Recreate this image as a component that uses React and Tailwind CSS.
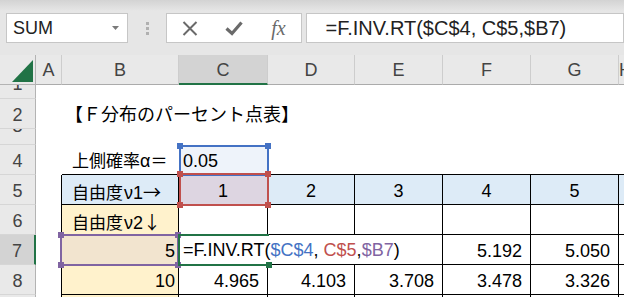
import React from "react";

const FONT = "font-['Liberation_Sans','Noto_Sans_CJK_JP',sans-serif]";

function Corner({ pos, color }) {
  return <div className={`absolute h-[6px] w-[6px] ${pos} ${color}`} />;
}

function RowHead({ children, cls = "", inner = "pt-[1px]" }) {
  return (
    <div className={`overflow-hidden border-b border-r border-b-[#d6d6d6] border-r-[#b3b3b3] text-center text-[#444] ${cls}`}>
      <div className={`leading-[30px] ${inner}`}>{children}</div>
    </div>
  );
}

function ColHead({ children, cls = "" }) {
  return (
    <div className={`border-b border-r border-b-[#ababab] border-r-[#cdcdcd] bg-[#e9e9e9] text-center leading-[30px] text-[#444] ${cls}`}>
      {children}
    </div>
  );
}

const T = "border-b border-r border-black";
const ARROW = "font-['Noto_Sans_CJK_JP',sans-serif] text-[18px] [font-variant-east-asian:full-width]";

export default function App() {
  return (
    <div className={`h-[297px] w-[624px] overflow-hidden bg-white ${FONT}`}>
      {/* toolbar */}
      <div className="flex h-[55px] items-start bg-[linear-gradient(to_bottom,#d3d3d3_0px,#e6e6e6_11px,#e6e6e6_100%)] pt-[13px]">
        <div className="ml-[6px] flex h-[30px] w-[126px] items-center border border-[#c6c6c6] bg-white pl-[6px] text-[18px] text-[#222]">
          <span className="flex-1 leading-[28px]">SUM</span>
          <svg width="8" height="5" viewBox="0 0 8 5" className="mr-[7px]">
            <polygon points="0,0 7,0 3.5,4" fill="#7a7a7a" />
          </svg>
        </div>
        <div className="ml-[18px] mt-[9px] flex w-[3px] flex-col gap-[2px]">
          <div className="h-[3px] w-[3px] bg-[#b0b0b0]" />
          <div className="h-[3px] w-[3px] bg-[#b0b0b0]" />
          <div className="h-[3px] w-[3px] bg-[#b0b0b0]" />
        </div>
        <div className="ml-[17px] flex h-[30px] w-[136px] items-center border border-[#c6c6c6] bg-white pl-[1px]">
          <div className="flex w-[45px] justify-center">
            <svg width="16" height="15" viewBox="0 0 16 15">
              <path d="M1.5 1 L14.5 14 M14.5 1 L1.5 14" stroke="#6a6a6a" strokeWidth="2" fill="none" />
            </svg>
          </div>
          <div className="flex w-[45px] justify-center">
            <svg width="18" height="15" viewBox="0 0 18 15">
              <path d="M1.5 7.5 L7 12.5 L16.5 1.5" stroke="#6a6a6a" strokeWidth="3.2" fill="none" />
            </svg>
          </div>
          <div className="flex w-[45px] justify-center font-['Liberation_Serif',serif] text-[20px] italic leading-[28px] text-[#6a6a6a]">
            fx
          </div>
        </div>
        <div className="ml-[4px] flex h-[30px] w-[330px] items-center border border-[#c6c6c6] bg-white pl-[19px] text-[20px] text-[#222]">
          <span className="leading-[28px]">=F.INV.RT($C$4, C$5,$B7)</span>
        </div>
      </div>

      {/* sheet */}
      <div className="grid grid-cols-[36px_26px_117px_89px_87px_88px_88px_88px_1fr] grid-rows-[30px_14px_30px_16px_30px_30px_30px_30px_30px] text-[18px] text-black">
        {/* header row */}
        <div className="relative border-b border-r border-[#b3b3b3] bg-[#e9e9e9]">
          <svg className="absolute left-0 top-0" width="36" height="30">
            <polygon points="12,27 33,5 33,27" fill="#217346" />
          </svg>
        </div>
        <ColHead>A</ColHead>
        <ColHead>B</ColHead>
        <ColHead cls="!border-b-2 !border-b-[#217346] !bg-[#d3d3d3] text-[#2f5541]">C</ColHead>
        <ColHead>D</ColHead>
        <ColHead>E</ColHead>
        <ColHead>F</ColHead>
        <ColHead>G</ColHead>
        <ColHead>H</ColHead>

        {/* row 1 */}
        <RowHead cls="bg-[#e9e9e9]" inner="-mt-[16px]">1</RowHead>
        <div /><div /><div /><div /><div /><div /><div /><div />

        {/* row 2 */}
        <RowHead cls="bg-[#e9e9e9]">2</RowHead>
        <div />
        <div className="whitespace-nowrap pl-[3px] pt-[1px] leading-[30px]">【Ｆ分布のパーセント点表】</div>
        <div /><div /><div /><div /><div /><div />

        {/* row 3 */}
        <RowHead cls="bg-[#e9e9e9]" inner="-mt-[18px]">3</RowHead>
        <div /><div /><div /><div /><div /><div /><div /><div />

        {/* row 4 */}
        <RowHead cls="bg-[#e9e9e9]">4</RowHead>
        <div />
        <div className="whitespace-nowrap border-b border-black pl-[10px] pt-[1px] leading-[30px]">
          <span className="text-[17px]">上側確率</span>α<span className="text-[17px]">＝</span>
        </div>
        <div className="relative border-b border-black bg-[#eef3fa] pl-[4px] pt-[1px] leading-[30px]">
          0.05
          <div className="pointer-events-none absolute left-0 top-0 z-10 h-[31px] w-[90px] border-2 border-[#4472c4]">
            <Corner pos="-left-[4px] -top-[4px]" color="bg-[#4472c4]" />
            <Corner pos="-right-[4px] -top-[4px]" color="bg-[#4472c4]" />
          </div>
        </div>
        <div className="border-b border-black" />
        <div className="border-b border-black" />
        <div className="border-b border-black" />
        <div className="border-b border-black" />
        <div className="border-b border-black" />

        {/* row 5 */}
        <RowHead cls="bg-[#e9e9e9]">5</RowHead>
        <div className="border-r border-black" />
        <div className={`${T} whitespace-nowrap bg-[#ddebf7] pl-[10px] pt-[1px] leading-[30px]`}>
          <span className="text-[17px]">自由度</span>
          <span className="ml-[1px]">ν</span>1<span className={ARROW}>→</span>
        </div>
        <div className={`${T} relative bg-[#ddd5e1] pt-[1px] text-center leading-[30px]`}>
          1
          <div className="pointer-events-none absolute -top-[2px] left-0 z-20 h-[33px] w-[90px] border-2 border-[#c0504d]">
            <Corner pos="-left-[4px] -top-[4px]" color="bg-[#c0504d]" />
            <Corner pos="-right-[4px] -top-[4px]" color="bg-[#c0504d]" />
            <Corner pos="-left-[4px] -bottom-[4px]" color="bg-[#c0504d]" />
            <Corner pos="-right-[4px] -bottom-[4px]" color="bg-[#c0504d]" />
          </div>
        </div>
        <div className={`${T} bg-[#ddebf7] pt-[1px] text-center leading-[30px]`}>2</div>
        <div className={`${T} bg-[#ddebf7] pt-[1px] text-center leading-[30px]`}>3</div>
        <div className={`${T} bg-[#ddebf7] pt-[1px] text-center leading-[30px]`}>4</div>
        <div className={`${T} bg-[#ddebf7] pt-[1px] text-center leading-[30px]`}>5</div>
        <div className={`${T} bg-[#ddebf7]`} />

        {/* row 6 */}
        <RowHead cls="bg-[#e9e9e9]">6</RowHead>
        <div className="border-r border-black" />
        <div className={`${T} whitespace-nowrap bg-[#fff2cc] pl-[10px] pt-[1px] leading-[30px]`}>
          <span className="text-[17px]">自由度</span>
          <span className="ml-[1px]">ν</span>2<span className={ARROW}>↓</span>
        </div>
        <div className={T} />
        <div className={T} />
        <div className={T} />
        <div className={T} />
        <div className={T} />
        <div className={T} />

        {/* row 7 */}
        <RowHead cls="!border-r-2 !border-r-[#217346] bg-[#d3d3d3] text-[#2f5541]">7</RowHead>
        <div className="border-r border-black" />
        <div className={`${T} relative bg-[#f2e4cf] pr-[3px] pt-[1px] text-right leading-[30px]`}>
          5
          <div className="pointer-events-none absolute -left-[2px] -top-[1px] z-20 h-[32px] w-[119px] border-2 border-[#8064a2]">
            <Corner pos="-left-[4px] -top-[4px]" color="bg-[#8064a2]" />
            <Corner pos="-right-[4px] -top-[4px]" color="bg-[#8064a2]" />
            <Corner pos="-left-[4px] -bottom-[4px]" color="bg-[#8064a2]" />
            <Corner pos="-right-[4px] -bottom-[4px]" color="bg-[#8064a2]" />
          </div>
        </div>
        <div className={`${T} relative`}>
          <div className="absolute left-0 top-0 z-10 h-[29px] w-[263px] whitespace-nowrap bg-white pl-[4px] pt-[1px] leading-[28px]">
            =F.INV.RT(<span className="text-[#4472c4]">$C$4</span>, <span className="text-[#c0504d]">C$5</span>,<span className="text-[#8064a2]">$B7</span>)
          </div>
          <div className="pointer-events-none absolute -left-[1px] -top-[1px] z-30 h-[32px] w-[91px] border-y-2 border-l-2 border-[#217346]">
            <Corner pos="-right-[3px] -bottom-[4px]" color="bg-[#217346]" />
          </div>
        </div>
        <div className={T} />
        <div className={T} />
        <div className={`${T} pr-[8px] pt-[1px] text-right leading-[30px]`}>5.192</div>
        <div className={`${T} pr-[8px] pt-[1px] text-right leading-[30px]`}>5.050</div>
        <div className={T} />

        {/* row 8 */}
        <RowHead cls="bg-[#e9e9e9]">8</RowHead>
        <div className="border-r border-black" />
        <div className={`${T} bg-[#fff2cc] pr-[3px] pt-[1px] text-right leading-[30px]`}>10</div>
        <div className={`${T} pr-[8px] pt-[1px] text-right leading-[30px]`}>4.965</div>
        <div className={`${T} pr-[8px] pt-[1px] text-right leading-[30px]`}>4.103</div>
        <div className={`${T} pr-[8px] pt-[1px] text-right leading-[30px]`}>3.708</div>
        <div className={`${T} pr-[8px] pt-[1px] text-right leading-[30px]`}>3.478</div>
        <div className={`${T} pr-[8px] pt-[1px] text-right leading-[30px]`}>3.326</div>
        <div className={T} />

        {/* row 9 */}
        <RowHead cls="bg-[#e9e9e9]">9</RowHead>
        <div className="border-r border-black" />
        <div className={`${T} bg-[#fff2cc]`} />
        <div className={T} />
        <div className={T} />
        <div className={T} />
        <div className={T} />
        <div className={T} />
        <div className={T} />
      </div>
    </div>
  );
}
